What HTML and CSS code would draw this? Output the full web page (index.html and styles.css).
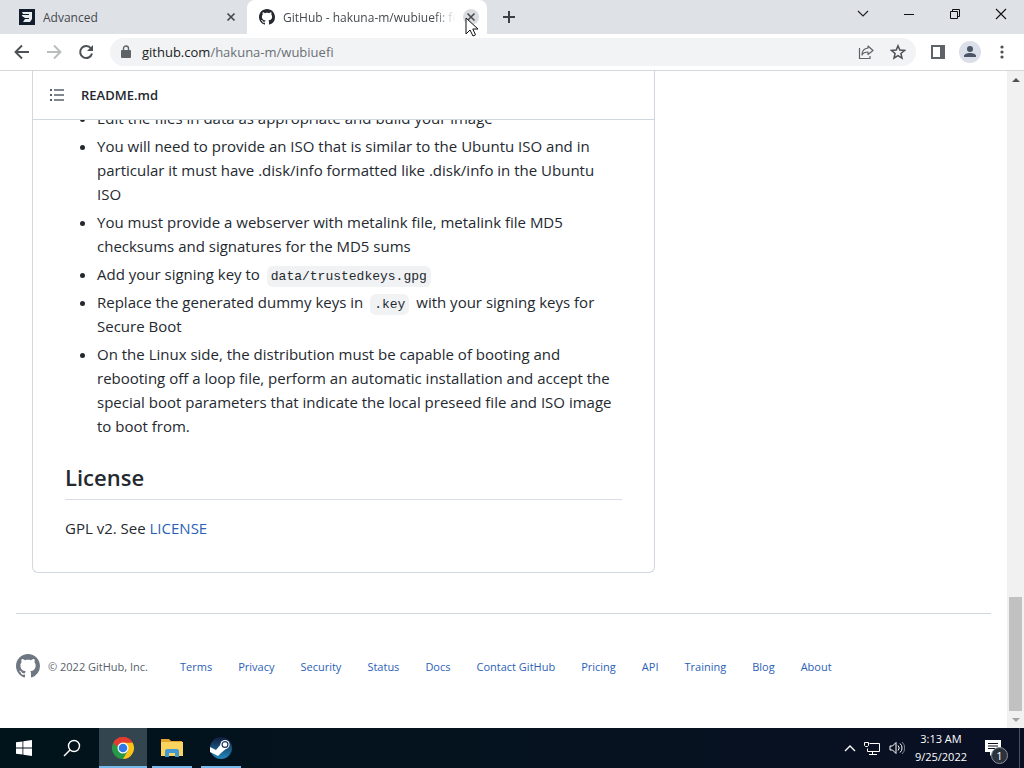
FILE: index.html
```html
<!DOCTYPE html>
<html lang="en">
<head>
    <title>GitHub - hakuna-m/wubiuefi</title>
    <meta charset="UTF-8" />
    <meta name="viewport" content="width=device-width, initial-scale=1.0" />
    <link rel="stylesheet" href="styles.css">
</head>
<body>
    <!-- Tab strip -->
    <header class="tab-strip">
        <div class="tab">
            <svg class="favicon" viewBox="0 0 16 16">
                <rect width="16" height="16" fill="#111d2b"/>
                <path d="M3 3h10v7l-2 3H4l2-3h4V9H6L3 7V6h7V5H4z" fill="#e8edf2"/>
            </svg>
            <span class="tab-title">Advanced</span>
            <button class="tab-close" title="Close tab">
                <svg width="10" height="10" viewBox="0 0 10 10"><path d="M1.500 1.500l7 7M8.500 1.500l-7 7" stroke="#45494d" stroke-width="1.700"/></svg>
            </button>
        </div>
        <div class="tab active">
            <svg class="favicon" viewBox="0 0 16 16">
                <path fill="#24292f" d="M8 0C3.580 0 0 3.580 0 8c0 3.540 2.290 6.530 5.470 7.590.4.070.55-.17.55-.38 0-.19-.01-.82-.01-1.490-2.010.37-2.530-.49-2.690-.94-.09-.23-.48-.94-.82-1.130-.28-.15-.68-.52-.01-.53.63-.01 1.080.58 1.230.82.72 1.210 1.870.87 2.330.66.07-.52.28-.87.51-1.070-1.780-.2-3.640-.89-3.640-3.950 0-.87.31-1.590.82-2.150-.08-.2-.36-1.020.08-2.120 0 0 .67-.21 2.200.82.64-.18 1.320-.27 2-.27s1.360.09 2 .27c1.530-1.040 2.200-.82 2.200-.82.44 1.100.16 1.920.08 2.120.51.56.82 1.270.82 2.150 0 3.070-1.870 3.750-3.650 3.950.29.25.54.73.54 1.480 0 1.070-.01 1.930-.01 2.200 0 .21.15.46.55.38A8.010 8.010 0 0 0 16 8c0-4.420-3.580-8-8-8z"/>
            </svg>
            <span class="tab-title">GitHub - hakuna-m/wubiuefi: fork of Wubi</span>
            <button class="tab-close hovered" title="Close tab">
                <svg width="10" height="10" viewBox="0 0 10 10"><path d="M1.500 1.500l7 7M8.500 1.500l-7 7" stroke="#45494d" stroke-width="1.500"/></svg>
                <svg class="cursor" width="14" height="21" viewBox="0 0 14 21">
                    <path d="M1 1v16l4-4 3 6 2.500-1.200L7.800 12H13z" fill="#fff" stroke="#111" stroke-linejoin="round"/>
                </svg>
            </button>
        </div>
        <button class="new-tab" title="New tab">
            <svg width="12" height="12" viewBox="0 0 12 12"><path d="M6 0v12M0 6h12" stroke="#3c4043" stroke-width="2"/></svg>
        </button>
        <div class="window-controls">
            <button title="Search tabs"><svg width="12" height="12" viewBox="0 0 12 12"><path d="M1 3l5 5 5-5" fill="none" stroke="#222" stroke-width="1.200"/></svg></button>
            <button title="Minimize"><svg width="12" height="12" viewBox="0 0 12 12"><path d="M1 6.500h10" stroke="#111"/></svg></button>
            <button title="Restore"><svg width="12" height="12" viewBox="0 0 12 12"><path d="M1.500 3.500h7v7h-7zM3.500 3.500v-2h7v7h-2" fill="none" stroke="#111"/></svg></button>
            <button title="Close"><svg width="12" height="12" viewBox="0 0 12 12"><path d="M1 1l10 10M11 1L1 11" stroke="#111" stroke-width="1.100"/></svg></button>
        </div>
    </header>

    <!-- Toolbar -->
    <nav class="toolbar">
        <button class="tool-btn" title="Back"><svg width="16" height="16" viewBox="0 0 16 16"><path d="M15 8H2M8 1.500L1.500 8 8 14.500" fill="none" stroke="#4d5156" stroke-width="1.900"/></svg></button>
        <button class="tool-btn" title="Forward"><svg width="16" height="16" viewBox="0 0 16 16"><path d="M1 8h13M8 1.500L14.500 8 8 14.500" fill="none" stroke="#babcbe" stroke-width="1.900"/></svg></button>
        <button class="tool-btn" title="Reload"><svg width="16" height="16" viewBox="0 0 16 16"><path d="M13 4.500A6 6 0 1 0 14 9.500" fill="none" stroke="#4d5156" stroke-width="2"/><path d="M15 1v6H9z" fill="#4d5156"/></svg></button>
        <div class="omnibox">
            <svg width="12" height="14" viewBox="0 0 12 14"><rect x="1" y="5" width="10" height="8" rx="1" fill="#5f6368"/><path d="M3.500 5.500V3.500a2.500 2.500 0 0 1 5 0v2" fill="none" stroke="#5f6368" stroke-width="1.400"/></svg>
            <div class="address">github.com<span>/hakuna-m/wubiuefi</span></div>
            <button class="tool-btn" title="Share"><svg width="16" height="16" viewBox="0 0 16 16"><path d="M1.500 4v10.500h10.500V12" fill="none" stroke="#5f6368" stroke-width="1.200"/><path d="M10 2l5 4.500-5 4V8c-3 0-5 1-6 3 0-4 2-6.500 6-7z" fill="none" stroke="#5f6368" stroke-width="1.200" stroke-linejoin="round"/></svg></button>
            <button class="tool-btn" title="Bookmark this tab"><svg width="16" height="16" viewBox="0 0 16 16"><path d="M8 1.800l1.800 4.300 4.700.4-3.600 3 1.100 4.600L8 11.600l-4 2.500 1.100-4.600-3.600-3 4.700-.4z" fill="none" stroke="#4d5156" stroke-width="1.500"/></svg></button>
        </div>
        <button class="tool-btn" title="Side panel"><svg width="14" height="14" viewBox="0 0 14 14"><path d="M1 1h12v12H1z" fill="none" stroke="#5f6368" stroke-width="2"/><path d="M9 1h4v12H9z" fill="#5f6368"/></svg></button>
        <button class="tool-btn" title="Profile"><svg width="22" height="22" viewBox="0 0 22 22"><circle cx="11" cy="11" r="11" fill="#dadfe9"/><circle cx="11" cy="8" r="3" fill="#4b5566"/><path d="M5 16v-1c0-2 3-3 6-3s6 1 6 3v1z" fill="#4b5566"/></svg></button>
        <button class="tool-btn" title="Menu"><svg width="4" height="14" viewBox="0 0 4 14" fill="#4d5156"><circle cx="2" cy="2" r="1.600"/><circle cx="2" cy="7" r="1.600"/><circle cx="2" cy="12" r="1.600"/></svg></button>
    </nav>

    <div class="viewport">
        <main class="page">
            <div class="repo-layout">
                <section class="readme">
                    <div class="readme-header">
                        <button class="toc-btn" title="Table of contents">
                            <svg width="16" height="16" viewBox="0 0 16 16"><path d="M5 3h10M5 8h10M5 13h10" stroke="#57606a" stroke-width="1.300"/><path d="M1 3h2M1 8h2M1 13h2" stroke="#57606a" stroke-width="1.800"/></svg>
                        </button>
                        <h2 class="readme-name">README.md</h2>
                    </div>
                    <div class="readme-body">
                        <ul class="readme-list">
                            <li>Edit the files in data as appropriate and build your image</li>
                            <li>You will need to provide an ISO that is similar to the Ubuntu ISO and in particular it must have .disk/info formatted like .disk/info in the Ubuntu ISO</li>
                            <li>You must provide a webserver with metalink file, metalink file MD5 checksums and signatures for the MD5 sums</li>
                            <li>Add your signing key to <code>data/trustedkeys.gpg</code></li>
                            <li>Replace the generated dummy keys in <code>.key</code> with your signing keys for Secure Boot</li>
                            <li>On the Linux side, the distribution must be capable of booting and rebooting off a loop file, perform an automatic installation and accept the special boot parameters that indicate the local preseed file and ISO image to boot from.</li>
                        </ul>
                        <h2 class="section-title">License</h2>
                        <p>GPL v2. See <a href="#">LICENSE</a></p>
                    </div>
                </section>
            </div>
            <footer class="footer">
                <svg width="24" height="24" viewBox="0 0 16 16">
                    <path fill="#6e7781" d="M8 0C3.580 0 0 3.580 0 8c0 3.540 2.290 6.530 5.470 7.590.4.070.55-.17.55-.38 0-.19-.01-.82-.01-1.490-2.010.37-2.530-.49-2.690-.94-.09-.23-.48-.94-.82-1.130-.28-.15-.68-.52-.01-.53.63-.01 1.080.58 1.230.82.72 1.210 1.870.87 2.330.66.07-.52.28-.87.51-1.070-1.780-.2-3.640-.89-3.640-3.950 0-.87.31-1.590.82-2.150-.08-.2-.36-1.020.08-2.120 0 0 .67-.21 2.200.82.64-.18 1.320-.27 2-.27s1.360.09 2 .27c1.530-1.040 2.200-.82 2.200-.82.44 1.100.16 1.920.08 2.120.51.56.82 1.270.82 2.150 0 3.070-1.870 3.750-3.650 3.950.29.25.54.73.54 1.480 0 1.070-.01 1.930-.01 2.200 0 .21.15.46.55.38A8.010 8.010 0 0 0 16 8c0-4.420-3.580-8-8-8z"/>
                </svg>
                <span class="copyright">© 2022 GitHub, Inc.</span>
                <nav class="footer-links">
                    <a href="#">Terms</a>
                    <a href="#">Privacy</a>
                    <a href="#">Security</a>
                    <a href="#">Status</a>
                    <a href="#">Docs</a>
                    <a href="#">Contact GitHub</a>
                    <a href="#">Pricing</a>
                    <a href="#">API</a>
                    <a href="#">Training</a>
                    <a href="#">Blog</a>
                    <a href="#">About</a>
                </nav>
            </footer>
        </main>
        <div class="scrollbar">
            <button title="Scroll up"><svg width="8" height="4" viewBox="0 0 8 4"><path d="M0 4l4-4 4 4z" fill="#505050"/></svg></button>
            <div class="scroll-track"><div class="scroll-thumb"></div></div>
            <button title="Scroll down"><svg width="8" height="4" viewBox="0 0 8 4"><path d="M0 0l4 4 4-4z" fill="#a3a3a3"/></svg></button>
        </div>
    </div>

    <!-- Taskbar -->
    <footer class="taskbar">
        <button class="task" title="Start">
            <svg width="16" height="16" viewBox="0 0 16 16" fill="#fff"><path d="M0 2.300L6.500 1.400v6.100H0zM7.300 1.300L16 0v7.500H7.300zM0 8.400h6.500v6.200L0 13.700zM7.300 8.400H16V16l-8.700-1.300z"/></svg>
        </button>
        <button class="task" title="Search">
            <svg width="18" height="18" viewBox="0 0 18 18" fill="none" stroke="#fff" stroke-width="1.400"><circle cx="11" cy="7" r="5.500"/><path d="M7 11l-6 6"/></svg>
        </button>
        <button class="task running focused" title="Google Chrome">
            <svg width="24" height="24" viewBox="0 0 24 24">
                <path d="M12 12L2.470 6.500A11 11 0 0 1 21.530 6.500z" fill="#e33b2e"/>
                <path d="M12 12L21.530 6.500A11 11 0 0 1 12 23z" fill="#fbc116"/>
                <path d="M12 12v11A11 11 0 0 1 2.470 6.500z" fill="#279847"/>
                <path d="M12 6.500h9.530L16.800 14.700z" fill="#fbc116"/>
                <path d="M16.800 14.700L12 23l-4.700-8.300z" fill="#279847"/>
                <path d="M2.470 6.500H12l-4.700 8.200z" fill="#279847"/>
                <path d="M2.470 6.500A11 11 0 0 1 21.530 6.500H12a5.500 5.500 0 0 0-4.800 2.800L5 10.500z" fill="#e33b2e"/>
                <circle cx="12" cy="12" r="5.500" fill="#fff"/>
                <circle cx="12" cy="12" r="4.300" fill="#3078e8"/>
            </svg>
        </button>
        <button class="task running" title="File Explorer">
            <svg width="22" height="20" viewBox="0 0 22 20">
                <path d="M0 1h8l2 2h11v4H0z" fill="#e5a52e"/>
                <path d="M0 4h22v14H0z" fill="#fbd45f"/>
                <path d="M4 19v-6c0-1 1-2 2-2h10c1 0 2 1 2 2v6h-4v-4H8v4z" fill="#4199d3"/>
            </svg>
        </button>
        <button class="task running" title="Steam">
            <svg width="22" height="22" viewBox="0 0 22 22">
                <defs>
                    <linearGradient id="steam" x1="0" y1="0" x2="0" y2="1"><stop offset="0" stop-color="#101c3c"/><stop offset="1" stop-color="#2287bc"/></linearGradient>
                </defs>
                <circle cx="11" cy="11" r="11" fill="url(#steam)"/>
                <path d="M0 10l6 3 5-6 6 4-6 5-3 3-4-2-4-2z" fill="#fff"/>
                <circle cx="15" cy="7.500" r="4.600" fill="#fff"/>
                <circle cx="15" cy="7.500" r="2.900" fill="none" stroke="#1c355d" stroke-width="1.200"/>
            </svg>
        </button>
        <div class="tray">
            <button title="Show hidden icons"><svg width="12" height="8" viewBox="0 0 12 8"><path d="M1 7l5-5 5 5" fill="none" stroke="#fff" stroke-width="1.400"/></svg></button>
            <button title="Network"><svg width="17" height="15" viewBox="0 0 17 15" fill="none" stroke="#fff"><path d="M5.500 2.500h10v8h-12v-3M8.500 10.500v3M5 13.500h8M.5 1.500h4v3l-1 1h-2l-1-1z"/></svg></button>
            <button title="Volume"><svg width="16" height="14" viewBox="0 0 16 14" fill="none" stroke="#fff"><path d="M1 5h2.500L7 1.500v11L3.500 9H1zM9 4.500a3.500 3.500 0 0 1 0 5M11 2.500a6 6 0 0 1 0 9"/><path d="M13 1a8 8 0 0 1 0 12" stroke="#7d8791"/></svg></button>
            <div class="clock">
                <span>3:13 AM</span>
                <span>9/25/2022</span>
            </div>
            <button class="notify" title="Notifications">
                <svg width="16" height="16" viewBox="0 0 16 16"><path d="M0 0h16v12H9l-4 4v-4H0z" fill="#fff"/><path d="M3 3.500h10M3 6h10M3 8.500h7" stroke="#08121f"/></svg>
                <span class="badge">1</span>
            </button>
            <div class="show-desktop"></div>
        </div>
    </footer>
</body>
</html>
```
FILE: styles.css
```css
* {
    box-sizing: border-box;
}

body {
    margin: 0;
    height: 100vh;
    display: flex;
    flex-direction: column;
    overflow: hidden;
    font-family: 'Open Sans', 'Noto Sans', sans-serif;
    font-size: 15px;
    color: #24292f;
    background: #fff;
}

button {
    display: flex;
    align-items: center;
    justify-content: center;
    padding: 0;
    border: none;
    background: none;
    font-family: inherit;
}

svg {
    display: block;
    flex-shrink: 0;
}

a {
    color: #2c5fb8;
    text-decoration: none;
}

/* Tab strip */
.tab-strip {
    display: flex;
    flex-shrink: 0;
    height: 34px;
    padding-left: 7px;
    background: #dee1e6;
}

.tab {
    display: flex;
    align-items: center;
    flex: 0 1 240px;
    min-width: 0;
    gap: 8px;
    padding: 0 8px 0 12px;
    font-size: 12px;
    color: #45494d;
}

.tab.active {
    background: #fff;
    border-radius: 8px 8px 0 0;
}

.favicon {
    width: 16px;
    height: 16px;
}

.tab-title {
    flex: 1;
    overflow: hidden;
    white-space: nowrap;
}

.active .tab-title {
    -webkit-mask-image: linear-gradient(to right, #000 88%, transparent);
    mask-image: linear-gradient(to right, #000 88%, transparent);
}

.tab-close {
    position: relative;
    width: 16px;
    height: 16px;
    border-radius: 50%;
}

.tab-close.hovered {
    background: #dadce0;
}

.cursor {
    position: absolute;
    top: 8px;
    left: 2px;
}

.new-tab {
    width: 28px;
    margin-left: 8px;
}

.window-controls {
    display: flex;
    margin-left: auto;
}

.window-controls button {
    width: 46px;
    height: 28px;
}

/* Toolbar */
.toolbar {
    display: flex;
    align-items: center;
    flex-shrink: 0;
    gap: 4px;
    height: 37px;
    padding: 0 8px;
    border-bottom: 1px solid #d5d7da;
}

.tool-btn {
    width: 28px;
    height: 28px;
    flex-shrink: 0;
}

.omnibox {
    display: flex;
    align-items: center;
    flex: 1;
    gap: 4px;
    height: 28px;
    margin: 0 4px 0 6px;
    padding: 0 4px 0 10px;
    border-radius: 14px;
    background: #f1f3f4;
}

.address {
    flex: 1;
    padding-left: 6px;
    font-size: 13px;
    color: #202124;
}

.address span {
    color: #6b6f74;
}

/* Page */
.viewport {
    display: flex;
    flex: 1;
    min-height: 0;
}

.page {
    flex: 1;
    min-width: 0;
    overflow: hidden;
}

.repo-layout {
    display: grid;
    grid-template-columns: minmax(0, 1fr) 296px;
    gap: 24px;
    padding: 0 32px;
}

.readme {
    border: 1px solid #d0d7de;
    border-top: none;
    border-radius: 0 0 6px 6px;
}

.readme-header {
    display: flex;
    align-items: center;
    gap: 16px;
    height: 49px;
    padding: 0 16px;
    border-bottom: 1px solid #d0d7de;
}

.readme-name {
    margin: 0;
    font-size: 13px;
    font-weight: 600;
}

.readme-body {
    padding: 0 32px 32px;
    overflow: hidden;
    line-height: 24px;
}

/* the list is scrolled partly under the header */
.readme-list {
    margin: -14px 0 24px;
    padding-left: 32px;
}

.readme-list li + li {
    margin-top: 4px;
}

.readme-body code {
    margin: 0 3px;
    padding: 3px 4px;
    border-radius: 6px;
    background: #f1f2f4;
    font-family: 'Liberation Mono', monospace;
    font-size: 13px;
    line-height: 16px;
}

.section-title {
    margin: 0 0 16px;
    padding-bottom: 7px;
    border-bottom: 1px solid #d8dee4;
    font-size: 22px;
    font-weight: 600;
    line-height: 30px;
}

.readme-body p {
    margin: 0;
}

.footer {
    display: flex;
    align-items: center;
    gap: 8px;
    margin: 40px 16px 0;
    padding: 40px 0;
    border-top: 1px solid #d0d7de;
    font-size: 11px;
    color: #57606a;
}

.footer-links {
    display: flex;
    gap: 26px;
    padding-left: 24px;
}

.copyright,
.footer-links a {
    white-space: nowrap;
}

/* Scrollbar */
.scrollbar {
    display: flex;
    flex-direction: column;
    width: 17px;
    background: #f1f1f1;
}

.scrollbar button {
    height: 17px;
}

.scroll-track {
    display: flex;
    flex: 1;
    align-items: flex-end;
    padding: 0 2px;
}

.scroll-thumb {
    width: 100%;
    height: 114px;
    background: #c1c1c1;
}

/* Taskbar */
.taskbar {
    display: flex;
    flex-shrink: 0;
    height: 40px;
    background: linear-gradient(to right, #01131b, #061220 60%, #0a1024);
    color: #fff;
}

.task {
    position: relative;
    width: 48px;
}

.task.running {
    margin-right: 1px;
}

.task.running::after {
    content: "";
    position: absolute;
    bottom: 0;
    left: 4px;
    right: 4px;
    height: 2px;
    background: #76b9ed;
}

.task.focused {
    margin-left: 3px;
    background: #33464f;
}

.task.focused::after {
    left: 0;
    right: 0;
}

.tray {
    display: flex;
    align-items: center;
    gap: 8px;
    margin-left: auto;
}

.clock {
    display: flex;
    flex-direction: column;
    align-items: center;
    padding-left: 2px;
    font-size: 11px;
    line-height: 18px;
}

.notify {
    position: relative;
    width: 36px;
    height: 40px;
    color: #fff;
}

.badge {
    position: absolute;
    right: 3px;
    bottom: 4px;
    width: 17px;
    height: 17px;
    border: 1px solid #8a9098;
    border-radius: 50%;
    background: #2b323c;
    font-size: 11px;
    line-height: 15px;
}

.show-desktop {
    width: 5px;
    height: 40px;
    border-left: 1px solid #4a525e;
}
```
